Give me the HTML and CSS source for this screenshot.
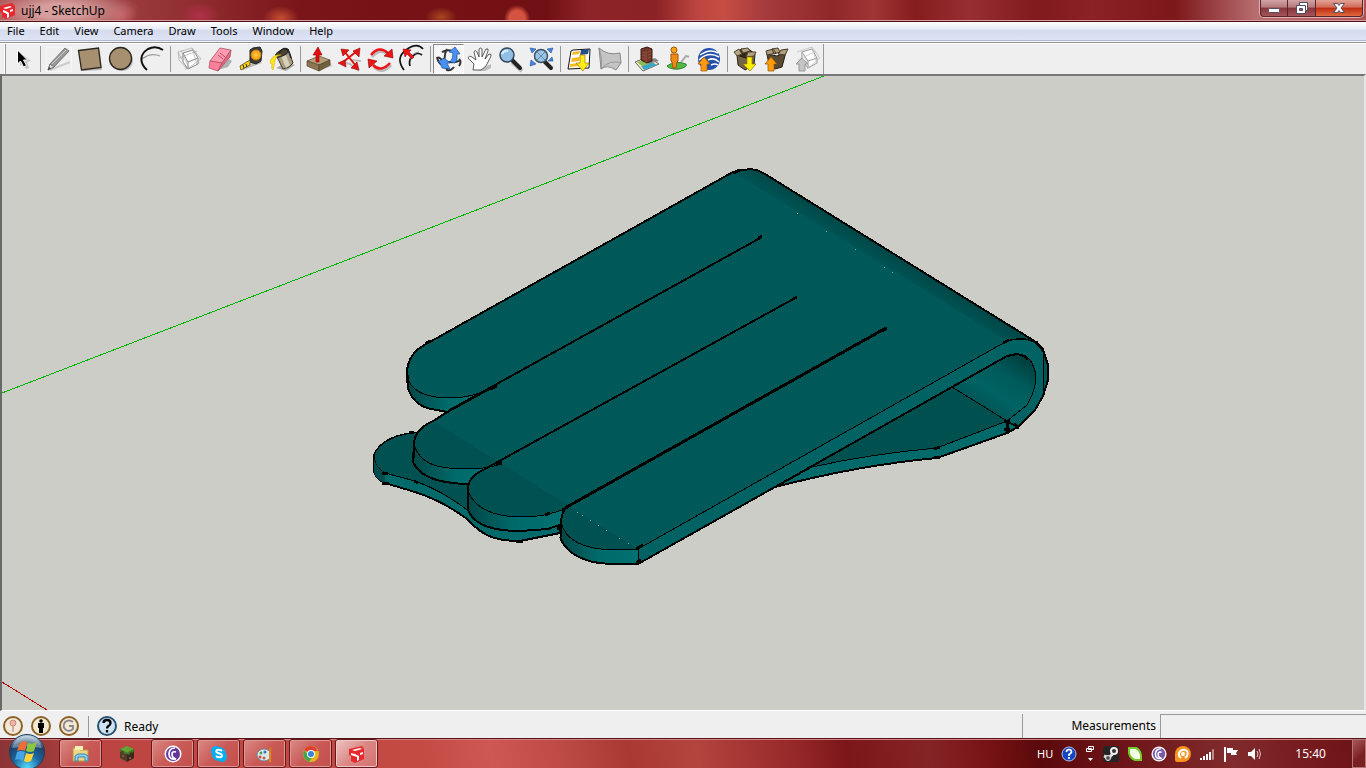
FILE: index.html
```html
<!DOCTYPE html>
<html lang="en">
<head>
    <meta charset="UTF-8">
    <meta name="viewport" content="width=device-width, initial-scale=1.0">
    <title>ujj4 - SketchUp</title>
    <link rel="stylesheet" href="styles.css">
</head>
<body>
    <!-- Title bar -->
    <header class="title-bar">
        <svg class="app-icon" viewBox="0 0 16 16"><path d="M0 3L12 0l3 3v9l-9 4-4-2v-4l-2-1z" fill="#e8282c"/><path d="M3 5l7-2 2 1-6 2zM3 7l3 1 3 2v4l-2 1v-4l-4-2zM10 7l3-1v2l-3 1z" fill="#fff"/></svg>
        <h1 class="title">ujj4 - SketchUp</h1>
        <div class="window-buttons">
            <button class="win-button" aria-label="Minimize"><svg viewBox="0 0 14 12"><rect x="1.5" y="6.500" width="11" height="4" rx="1" fill="#fff" stroke="#4e4f62"/></svg></button>
            <button class="win-button" aria-label="Restore"><svg viewBox="0 0 14 12"><path d="M4.500.5h8v8h-2v3h-9v-8h3z" fill="#fff" stroke="#4e4f62"/><path d="M4.500 6.500h3v2h-3z" fill="#a25a5e" stroke="#4e4f62"/><path d="M4.500 3.500h6v5" fill="none" stroke="#4e4f62"/></svg></button>
            <button class="win-button close" aria-label="Close"><svg viewBox="0 0 14 12"><path d="M1.500 1.500h4L7 3.500l1.500-2h4L9 6l3.500 4.500h-4L7 8.500l-1.500 2h-4L5 6z" fill="#fff" stroke="#4e4f62"/></svg></button>
        </div>
    </header>

    <!-- Menu -->
    <nav class="menu-bar">
        <button>File</button>
        <button>Edit</button>
        <button>View</button>
        <button>Camera</button>
        <button>Draw</button>
        <button>Tools</button>
        <button>Window</button>
        <button>Help</button>
    </nav>

    <!-- Toolbar -->
    <div class="toolbar" role="toolbar" aria-label="Getting started">
        <span class="grip"></span>
        <button aria-label="Select"><svg viewBox="0 0 31 30"><path d="M14 9v13l3-2 3 5 3-1-2-6 4-1z" fill="#999" opacity=".5"/><path d="M11.500 6v14l3-3 3 6 3-1.500-3-5.500h4z" stroke="#fff"/></svg></button>
        <span class="separator"></span>
        <button aria-label="Line"><svg viewBox="0 0 31 30"><rect x="3.500" y="3.500" width="25" height="24" fill="none" stroke="#fff" stroke-dasharray="1 1"/><path d="M7 26l20-8" stroke="#ccc" stroke-width="2"/><path d="M5 26l2-6L22 4l4 3-15 16z" fill="#999" stroke="#777"/><path d="M5 26l2-6 4 3z" fill="#ddd" stroke="#777"/><path d="M5 26l1-3 2 1.500z" fill="#444"/><path d="M9 20L23 6" stroke="#ccc"/></svg></button>
        <button aria-label="Rectangle"><svg viewBox="0 0 31 30"><path d="M8 9l18-2 2 19-19 1z" fill="#bbb"/><path d="M4.500 6.500L24.500 4l2.500 19.500-19.500 2.500z" fill="#a6906f" stroke="#2b2620" stroke-width="1.300"/></svg></button>
        <button aria-label="Circle"><svg viewBox="0 0 31 30"><circle cx="17" cy="16" r="11" fill="#bbb"/><circle cx="15.500" cy="14.500" r="11" fill="#a6906f" stroke="#2b2620" stroke-width="1.300"/></svg></button>
        <button aria-label="Arc"><svg viewBox="0 0 31 30" fill="none"><path d="M6 15q9-7 18-3" stroke="#999" stroke-width="1.200"/><path d="M11 26C2 18 5 9 12 5q8-4 15 1" stroke="#111" stroke-width="2"/></svg></button>
        <span class="separator"></span>
        <button aria-label="Make Component"><svg viewBox="0 0 31 30"><path d="M12 26l15-7-5-3-9 5z" fill="#ccc"/><path d="M10 9l10-3 5 8v6l-10 5-5-7z" fill="#fff" stroke="#888"/><path d="M15 18l10-4M15 18v7M10 9l5 9" fill="none" stroke="#888"/><path d="M5 8l14-4 9 11-14 10zM5 8l1 8 8 9M8 6l8 18M19 4l5 16M6 14l18-7" fill="none" stroke="#aaa" stroke-width=".7"/></svg></button>
        <button aria-label="Eraser"><svg viewBox="0 0 31 30"><path d="M14 26l11-11 3 2-4 6z" fill="#b0b0b0"/><path d="M16 4l11 2-9 13-12-2z" fill="#ff9bae" stroke="#ad5267" stroke-width=".8"/><path d="M6 17l12 2-4 8-9-3z" fill="#ff8098" stroke="#ad5267" stroke-width=".8"/><path d="M18 19l9-13-1 7-12 14z" fill="#e46882" stroke="#ad5267" stroke-width=".8"/><path d="M16 9l5 4M14 11l5 4" stroke="#c04a68"/></svg></button>
        <button aria-label="Tape Measure"><svg viewBox="0 0 31 30"><path d="M8 26l19-7-3-3-18 8z" fill="#bbb"/><path d="M15 6l3-2 7-1 2 4-1 10-5 3-6-2z" fill="#3b3b3b" stroke="#222"/><circle cx="21" cy="11" r="5" fill="#fbaa19" stroke="#c77b08"/><circle cx="21" cy="11" r="2" fill="#ffc74b"/><path d="M15 16v5L6 26l-1-4z" fill="#ffd21c" stroke="#53430a" stroke-width=".8"/><path d="M8 21l1 3M11 20l1 3" stroke="#222"/></svg></button>
        <button aria-label="Paint Bucket"><svg viewBox="0 0 31 30"><path d="M10 24l10 3 9-6-8-3z" fill="#aaa"/><path d="M10 11l12-6 5 14q-3 5-10 6z" fill="#a89c82" stroke="#3b352a"/><path d="M15 12l4-3 5 12-4 3z" fill="#d9d0ba"/><ellipse cx="16" cy="9" rx="7" ry="3" transform="rotate(-27 16 9)" fill="#4b4332" stroke="#222"/><path d="M13 9q8-11 12 5" fill="none" stroke="#222" stroke-width="1.500"/><path d="M15 11Q10 11 9 17l-2 9q-2-1-1-6-3 0-1-5 4-5 10-4z" fill="#ffe71b" stroke="#c8a800" stroke-width=".5"/></svg></button>
        <span class="separator"></span>
        <button aria-label="Push/Pull"><svg viewBox="0 0 31 30"><path d="M15 27l14-5-2-4-14 5z" fill="#bbb"/><path d="M4 17l12-5 11 4-11 5z" fill="#b69d79" stroke="#55462f" stroke-width=".7"/><path d="M4 17l12 4v6L4 22z" fill="#8e7654" stroke="#55462f" stroke-width=".7"/><path d="M16 21l11-5v5l-11 6z" fill="#73603f" stroke="#55462f" stroke-width=".7"/><path d="M15 3l4 8h-3v7h-3v-7h-3z" fill="#e30b0b" stroke="#910000" stroke-width=".6"/></svg></button>
        <button aria-label="Move"><svg viewBox="0 0 31 30"><path d="M8 18l8 2 9 7M17 16l10 1" fill="none" stroke="#bbb" stroke-width="2"/><path d="M10 7l12 15M23 7L8 19" stroke="#e41010" stroke-width="2"/><path d="M7 5l8 1-6 6zM26 4l-1 9-6-6zM4 19l7-3 1 7zM25 26l-8-2 6-6z" fill="#eb1212" stroke="#8d0808" stroke-width=".6"/></svg></button>
        <button aria-label="Rotate"><svg viewBox="0 0 31 30" fill="none"><path d="M6 11Q14 1 23 9M25 19q-9 10-17 2" stroke="#bbb" stroke-width="3" transform="translate(1 2)"/><path d="M6 11Q14 1 23 9M25 19q-9 10-17 2" stroke="#ed1515" stroke-width="2.500"/><path d="M27 5l1 9-9-2zM4 24l-1-9 9 2z" fill="#ed1515" stroke="#8b0505" stroke-width=".6"/></svg></button>
        <button aria-label="Offset"><svg viewBox="0 0 31 30" fill="none"><path d="M8 26Q-1 14 10 6t17-1M14 22q-2-7 4-11 4-3 8 0" stroke="#111" stroke-width="1.700"/><path d="M14 15q2-6 9-7" stroke="#888"/><path d="M7 5l8 1-2 2 5 5-2 2-5-5-2 3z" fill="#ef1515" stroke="#9b0505" stroke-width=".6"/></svg></button>
        <span class="separator"></span>
        <button class="pressed" aria-label="Orbit"><svg viewBox="0 0 31 30" fill="none"><path d="M9 8q8-4 14 1M5 13q10 8 21 4M14 5q-5 9 0 21 4 1 7-3" stroke="#333" stroke-width="2"/><path d="M4 13q1 7 8 9M26 15q3 3 0 7" stroke="#333" stroke-width="2"/><path d="M5 18l6-4 6 5h-3l3 6-8-1-2-5zM16 8l6-5 5 7h-3q1 6-2 9l-5-1q3-3 3-9z" fill="#4891f2" stroke="#1b4d96" stroke-width=".7"/></svg></button>
        <button aria-label="Pan"><svg viewBox="0 0 31 30"><path d="M14 27l13-7v4l-6 3z" fill="#bbb"/><path d="M9 26l1-6-6-6q1-3 4-1l4 3-2-8q1-3 3 0l2 5 0-8q2-2 3 0v8l4-8q3-1 2 2l-3 8 4-5q3 0 2 2l-5 10-5 4z" fill="#fff" stroke="#333" stroke-width=".8"/></svg></button>
        <button aria-label="Zoom"><svg viewBox="0 0 31 30"><path d="M17 18l10 9" stroke="#bbb" stroke-width="4"/><path d="M17 16l8 8" stroke="#222" stroke-width="4" stroke-linecap="round"/><circle cx="12" cy="11" r="7" fill="#92bfe5" stroke="#33495e" stroke-width="1.500"/><path d="M7 10q2-4 6-3" fill="none" stroke="#d9efff" stroke-width="2"/></svg></button>
        <button aria-label="Zoom Extents"><svg viewBox="0 0 31 30"><path d="M18 17l7 7" stroke="#222" stroke-width="4" stroke-linecap="round"/><circle cx="15" cy="12" r="6.500" fill="#9bc4e1" stroke="#3c5268" stroke-width="1.500"/><path d="M11 8l8 8M19 8l-8 8" stroke="#628caf"/><path d="M4 4l6 1-4 4zM27 4l-6 1 4 4zM4 22l1-6 5 4zM27 17l-5 0 4-4z" fill="#4385e0" stroke="#1f4f9c" stroke-width=".6"/></svg></button>
        <span class="separator"></span>
        <button aria-label="Add Location"><svg viewBox="0 0 31 30"><path d="M8 7l2-1 17-1-1 19-21 1z" fill="#fff" stroke="#111"/><path d="M9 14l8-1-1 4-8 1zM10 8l7-1-1 3-7 1zM7 20l9-1v3l-9 1z" fill="#f6b923"/><path d="M18 6l8-1-1 5-8 1z" fill="#234f85"/><path d="M17 11h5v8h4l-6 8-7-8h4z" fill="#ffeb18" stroke="#a77d05" stroke-width=".7"/></svg></button>
        <button aria-label="Toggle Terrain"><svg viewBox="0 0 31 30"><path d="M5 4q9 8 21 5l1 10-5 7q-9-6-15-1z" fill="#c4c4c4" stroke="#888"/><path d="M5 4q4 12 2 21 9-10 20-6" fill="none" stroke="#888" stroke-width=".7"/></svg></button>
        <span class="separator"></span>
        <button aria-label="Photo Textures"><svg viewBox="0 0 31 30"><path d="M4 18l13-5 11 7-16 7z" fill="#f4e7c4" stroke="#666"/><path d="M10 22l11-4 5 3-13 5z" fill="#3ba8cb"/><path d="M6 18l7-2 5 4-7 2z" fill="#8dbb54"/><path d="M17 20l11-3-4-3-6 2z" fill="#888"/><path d="M10 5l6-2 5 2v12l-5 2-6-3z" fill="#71372a" stroke="#3b1b13"/><path d="M15 7v11M11 8l3 1M11 11l3 1M11 14l3 1M17 8l3-1M17 11l3-1M17 14l3-1" stroke="#985542"/></svg></button>
        <button aria-label="Street View"><svg viewBox="0 0 31 30"><path d="M17 21l7-9 3 1" fill="none" stroke="#aaa" stroke-width="2"/><path d="M5 22q8-6 19-2 2 3-7 5-8 1-12-3z" fill="#52b947" stroke="#28882c"/><circle cx="12" cy="6" r="3" fill="#f6a51b" stroke="#a25b0a"/><path d="M9 10h7v7l-1 1-1 6h-3l-1-6-1-1z" fill="#ed8b14" stroke="#a95006"/></svg></button>
        <button aria-label="Preview in Google Earth"><svg viewBox="0 0 31 30"><circle cx="16" cy="15" r="11" fill="#2450aa"/><path d="M7 11q10-7 18-2M6 16q9-9 20-3M15 16q6-3 11 2M18 21q4-2 7 0" fill="none" stroke="#fff" stroke-width="1.500"/><path d="M11 13l6 7h-3v7H8v-7H5z" fill="#ff9b0b" stroke="#9d5600" stroke-width=".7"/></svg></button>
        <span class="separator"></span>
        <button aria-label="Get Models"><svg viewBox="0 0 31 30"><path d="M7 11l9 3 9-4-1 11-9 5-7-5z" fill="#74644a" stroke="#292116"/><path d="M7 11l4-6 9 1 5 4-9 4z" fill="#302819" stroke="#292116"/><path d="M7 12l-3-4 5-3 3 5zM11 5l7-1 2 3-7 2zM16 13l2-5 8 0-2 4z" fill="#b6a482" stroke="#51452f"/><path d="M17 13h5v7h4l-6 7-7-7h4z" fill="#fff000" stroke="#927900" stroke-width=".7"/></svg></button>
        <button aria-label="Share Model"><svg viewBox="0 0 31 30"><path d="M6 10l10 2 9-4-4 15-7 2-6-4z" fill="#594a34" stroke="#231c12"/><path d="M6 11l-1-4 7-2 3 4zM11 5l6-1 2 4-6 2zM17 10l3-4 7-1-3 6z" fill="#b09e7c" stroke="#463b28"/><path d="M10 13l6 7h-3v7H7v-7H4z" fill="#ff9c0b" stroke="#955000" stroke-width=".7"/></svg></button>
        <button aria-label="Share Component"><svg viewBox="0 0 31 30"><path d="M10 8l10-3 5 9v5l-9 5-6-8z" fill="#fff" stroke="#999"/><path d="M10 8l6 9 9-3M16 17v7" fill="none" stroke="#999"/><path d="M5 8l15-5 8 11-13 11M9 6l9 18M20 3l5 17M6 16l18-9" fill="none" stroke="#bbb" stroke-width=".7"/><path d="M10 14l6 6h-3v7H7v-7H4z" fill="#c5c5c5" stroke="#999"/></svg></button>
        <span class="toolbar-end"></span>
    </div>

    <!-- Model viewport -->
    <main class="viewport">
        <svg viewBox="2 76 1362 634" preserveAspectRatio="xMidYMid slice" role="img" aria-label="Teal model with four fingers">
            <defs>
                <linearGradient id="side1" x1="0" x2="1"><stop offset="0" stop-color="#004747"/><stop offset=".5" stop-color="#006b6b"/><stop offset="1" stop-color="#007070"/></linearGradient>
                <linearGradient id="roll" gradientUnits="userSpaceOnUse" x1="880" y1="262" x2="895" y2="238"><stop offset="0" stop-color="#005353"/><stop offset=".5" stop-color="#004646"/><stop offset="1" stop-color="#003333"/></linearGradient>
                <linearGradient id="inside" gradientUnits="userSpaceOnUse" x1="1018" y1="354" x2="980" y2="413"><stop offset="0" stop-color="#003f3f"/><stop offset=".35" stop-color="#005b5b"/><stop offset=".65" stop-color="#006363"/><stop offset="1" stop-color="#005050"/></linearGradient>
            </defs>
            <g shape-rendering="crispEdges" fill="none">
                <path d="M2 393L824 76" stroke="#00b400"/>
                <path d="M2 682L47 710" stroke="#b40000"/>
            </g>
            <g class="edges">
                <!-- lower plate -->
                <path d="M412 433Q382 437 374 455V472Q377 480 385 483L415 492Q443 501 467 519C482 535 493 541 520 541L560 533V470L440 430z" fill="#006a6a" class="bold"/>
                <path d="M412 433Q382 437 374 455Q374 467 385 473L415 481Q443 491 470 512L500 500 440 430z" fill="#005252"/>
                <path d="M374 457Q374 467 385 473V483Q376 480 374 472z" fill="#004d4d" stroke="none"/>
                <path d="M775 487Q860 465 937 458L1007 433 1018 427 1007 421 900 390z" fill="#006a6a" class="bold"/>
                <path d="M952 387L1007 421 937 448Q870 454 812 467L780 485 860 435z" fill="#005050"/>
                <!-- band and roll -->
                <path d="M952 387L1007 354 1038 354 1040 390 1025 410 1007 421z" fill="url(#inside)" stroke="none"/>
                <path d="M638 549L1007 341Q1014 338 1027 339L1036 342 1043 350 1048 365V380L1043 396 1035 410Q1028 419 1018 427L1007 421 1027 405Q1036 390 1036 377 1033 354 1017 354L1007 356 638 564z" fill="#006262"/>
                <path d="M952 387L1007 421"/>
                <path d="M1043 350L1048 365V380L1043 396z" fill="#005656"/>
                <!-- finger sides -->
                <path d="M407 376L408 388Q413 405 431 409L448 412 490 389z" fill="url(#side1)" class="bold"/>
                <path d="M414 442L413 462Q419 475 437 480 452 484 470 484L502 464z" fill="url(#side1)" class="bold"/>
                <path d="M468 487V510Q476 531 520 531L548 529 562 524 565 509z" fill="url(#side1)" class="bold"/>
                <path d="M561 522L560 537Q566 555 593 562 610 565 638 564V549z" fill="url(#side1)" stroke="none"/>
                <path d="M560 537Q566 555 593 562 610 565 638 564L775 487 1007 356 1017 354 1027 357M1007 341Q1014 338 1027 339L1036 342 1043 350 1048 365V380L1043 396 1035 410 1018 427" class="bold"/>
                <!-- top face -->
                <path d="M733 172L428 343Q407 354 407 376C411 393 430 398 450 398Q470 398 490 389L497 386 435 420Q414 430 414 444C419 463 435 469 467 469Q486 469 502 464L483 470Q468 477 468 491C476 512 500 517 523 517Q544 517 565 509 561 514 561 522C566 544 590 550 617 550L638 549 1007 341 733 172z" fill="#005858" stroke="none"/>
                <path d="M435 422Q414 431 414 444C419 463 435 469 467 469Q486 469 502 464L483 470Q468 477 468 491C476 512 500 517 523 517Q544 517 565 509 561 514 561 522C566 544 590 550 617 550L638 549z" fill="#005151" stroke="none"/>
                <path d="M733 172Q745 168 757 170L765 174 1036 342 1026 339Q1015 338 1007 341z" fill="url(#roll)" stroke="none"/>
                <path d="M407 376C411 393 430 398 450 398Q470 398 490 389M414 444C419 463 435 469 467 469Q486 469 502 464M468 491C476 512 500 517 523 517Q544 517 565 509M561 522C566 544 590 550 617 550L638 549 1007 341Q1015 338 1026 339L1036 342"/>
                <path d="M407 378Q405 354 428 343L733 172Q745 168 757 170L765 174 1036 342M448 411L762 237M447 412L435 420Q414 429 414 444V458M483 470L797 297M483 470Q468 477 468 489V509M565 509Q561 514 561 524V537" class="bold"/>
                <path d="M565 508L886 328" stroke-width="3"/>
                <path d="M733 173l7-3M758 238l4-2M793 299l4-2M490 389l7-3M496 465l6-3M562 510l6-3M882 331l5-3M636 549l7-4M1003 343l6-3M1024 356l4 3M1004 421h6M1007 420v14M1004 429h6M1014 424l5 4M934 449l6-2M934 458l6-1M1036 342l7 8M407 375v8M382 473l6 1M382 483h7M414 481l4 2M409 433l5-1M545 515l5-2M516 541h7M558 525v5M425 344l5-3M636 563l5-3" stroke-width="3"/>
            </g>
            <path d="M797 213h1M826 231h1M855 249h1M884 267h1M892 272h1M577 512h1M582 515h1M590 520h1M598 525h1M606 530h1M619 538h1M628 543h1" stroke="#72aaa9" shape-rendering="crispEdges"/>
        </svg>
    </main>

    <!-- Status bar -->
    <footer class="status-bar">
        <button class="status-icon" aria-label="Geo-location"><svg viewBox="0 0 22 22"><circle cx="11" cy="11" r="9" fill="#f3e8d8" stroke="#8b6226" stroke-width="2"/><circle cx="11" cy="8" r="3" fill="#efb6a7" stroke="#c98879"/><path d="M11 11v6" stroke="#aa7768"/></svg></button>
        <button class="status-icon" aria-label="Credits"><svg viewBox="0 0 22 22"><circle cx="11" cy="11" r="9" fill="#f3e8d0" stroke="#8b6226" stroke-width="2"/><circle cx="11" cy="6" r="1.800"/><path d="M8 8h6v5h-1v5H9v-5H8z"/></svg></button>
        <button class="status-icon" aria-label="Sign in"><svg viewBox="0 0 22 22"><circle cx="11" cy="11" r="9" fill="#f3e8d8" stroke="#8b6226" stroke-width="2"/><path d="M15 7q-4-3-8 0-3 5 1 8 4 2 7-1v-3h-4" fill="none" stroke="#888" stroke-width="1.800"/></svg></button>
        <span class="status-line"></span>
        <button class="status-icon" aria-label="Instructor"><svg viewBox="0 0 22 22"><circle cx="11" cy="11" r="9" fill="#cee4f5" stroke="#28526e" stroke-width="2"/><path d="M7.500 8q0-3 3.500-3t3.500 3q0 2-2 3-1.500 1-1.500 2.500M11 15v2.500" fill="none" stroke="#000" stroke-width="2.300"/></svg></button>
        <span class="status-text">Ready</span>
        <label class="measure-label" for="measure">Measurements</label>
        <input class="measure" id="measure" type="text">
    </footer>

    <!-- Windows taskbar -->
    <div class="taskbar">
        <button class="start" aria-label="Start"><svg viewBox="0 0 38 38"><defs><radialGradient id="orb" cx=".5" cy=".95" r=".9"><stop offset="0" stop-color="#55dcff"/><stop offset=".45" stop-color="#1b669e"/><stop offset=".8" stop-color="#1e4168"/><stop offset="1" stop-color="#a6c5d9"/></radialGradient></defs><circle cx="19" cy="19" r="17.500" fill="url(#orb)" stroke="#243e55"/><path d="M4 15Q8 3 19 3t15 12q-15-3-30 0z" fill="#fff" opacity=".35"/><path d="M12 10q4-3 7-1l-2 9q-4-2-8 0z" fill="#f26b32"/><path d="M20 10q4 2 9-1l-3 9q-4 2-8 0z" fill="#8cc63f"/><path d="M9 19q4-2 8 0l-2 9q-4-3-8-1z" fill="#45a4e5"/><path d="M18 20q4 2 8 0l-3 8q-4 2-7 0z" fill="#ffd23b"/></svg></button>
        <div class="tasks">
            <button class="task" aria-label="Explorer"><svg viewBox="0 0 18 18"><path d="M1 3h6l1 2h8v11H1z" fill="#efd681" stroke="#ba9542"/><path d="M3 1h8v4H3z" fill="#f7edb6"/><path d="M3 16v-5l3-2h7l3 2v5h-3v-4H6v4z" fill="#8fd0f0" stroke="#3686b9"/></svg></button>
            <button class="task plain" aria-label="Minecraft"><svg viewBox="0 0 18 18"><path d="M2 4l7 4v9l-7-4z" fill="#543a29"/><path d="M9 8l7-4v9l-7 4z" fill="#38271c"/><path d="M9 1l7 3-7 4-7-4z" fill="#61a436"/><path d="M2 4l7 4 7-4v2l-2 2-1-1-2 3-2-1-3 0-1-3-3 1z" fill="#42782a"/><path d="M4 10h2v2H4zM11 12h2v2h-2z" fill="#80573c"/></svg></button>
            <button class="task" aria-label="BitTorrent"><svg viewBox="0 0 18 18"><circle cx="9" cy="9" r="8.500" fill="#fff"/><circle cx="9" cy="9" r="7" fill="#63379b"/><path d="M11 3q-6 0-6 6t7 5q-4-1-4-5 0-3 4-2" fill="none" stroke="#fff" stroke-width="1.700"/></svg></button>
            <button class="task" aria-label="Skype"><svg viewBox="0 0 18 18"><rect x="1" y="1" width="10" height="10" rx="5" fill="#00aff0"/><rect x="7" y="7" width="10" height="10" rx="5" fill="#00aff0"/><circle cx="9" cy="9" r="7" fill="#00aff0"/><path d="M12 6q-2-2-5-1-2 2 1 3l3 1q2 2 0 3-3 1-5-1" fill="none" stroke="#fff" stroke-width="2"/></svg></button>
            <button class="task" aria-label="Paint"><svg viewBox="0 0 18 18"><ellipse cx="8" cy="10" rx="7" ry="6" fill="#d9e7ef" stroke="#6a8c9e"/><circle cx="5" cy="8" r="1.500" fill="#4b9f4a"/><circle cx="9" cy="7" r="1.500" fill="#3b74be"/><circle cx="4" cy="12" r="1.500" fill="#de4437"/><circle cx="8" cy="13" r="1.500" fill="#c85850"/><path d="M14 4v13" stroke="#e68613" stroke-width="2"/><path d="M13 5l1-4 2 3-1 3z" fill="#cf7a28"/></svg></button>
            <button class="task" aria-label="Chrome"><svg viewBox="0 0 18 18"><circle cx="9" cy="9" r="8" fill="#e4b51f"/><path d="M9 9L2 5q4-6 11-3l3 4H9z" fill="#df4031"/><path d="M2 5q-3 8 5 12l4-6-5-1z" fill="#44a64c"/><circle cx="9" cy="9" r="4" fill="#fff"/><circle cx="9" cy="9" r="3" fill="#3a83db"/></svg></button>
            <button class="task active" aria-label="SketchUp"><svg viewBox="0 0 18 18"><path d="M1 4L14 1l2 3v10l-9 4-4-2v-5l-2-1z" fill="#e8282c"/><path d="M4 5l8-2 2 1-7 2zM3 8l4 1 4 2v4l-2 1v-4l-6-2zM12 8l3-1v2l-3 1z" fill="#fff"/></svg></button>
        </div>
        <div class="tray">
            <span class="lang">HU</span>
            <svg viewBox="0 0 16 16"><circle cx="8" cy="8" r="7" fill="#1746c3" stroke="#aebde4"/><path d="M5.500 6q0-2.500 2.500-2.500T10.500 6Q10 7.500 8 8.500V10M8 11v2" fill="none" stroke="#fff" stroke-width="1.700"/></svg>
            <svg class="tray-restore" viewBox="0 0 10 16"><path d="M3.500.5h5v3h-5zM1.500 2.500h5v3h-5z" fill="#6d1012" stroke="#fff"/><path d="M3 12h5l-2.500 3z" fill="#fff"/></svg>
            <svg viewBox="0 0 16 16"><rect width="16" height="16" rx="2" fill="#252525"/><path d="M1 10l5 2 6-7" fill="none" stroke="#ddd" stroke-width="3"/><circle cx="11" cy="5" r="4" fill="#eee"/><circle cx="11" cy="5" r="2" fill="#333"/><circle cx="5" cy="12" r="2.500" fill="#555" stroke="#eee"/></svg>
            <svg viewBox="0 0 16 16"><path d="M2 2h7q4 2 5 7v5H8q-5-2-6-7z" fill="#f5ffe7" stroke="#75c928" stroke-width="2"/></svg>
            <svg viewBox="0 0 18 18"><circle cx="9" cy="9" r="8.500" fill="#fff"/><circle cx="9" cy="9" r="7" fill="#7a5aa6"/><path d="M11 3q-6 0-6 6t7 5q-4-1-4-5 0-3 4-2" fill="none" stroke="#fff" stroke-width="1.700"/></svg>
            <svg viewBox="0 0 16 16"><path d="M8 0a8 8 0 110 16H2q-2 0-2-2V8a8 8 0 018-8z" fill="#f7931e"/><path d="M6 12Q3 10 4 7q2-4 6-3t2 6l-2 2" fill="none" stroke="#fff" stroke-width="2"/><circle cx="8" cy="8" r="2" fill="#fff"/></svg>
            <svg viewBox="0 0 16 16"><path d="M1 12h2v2H1zM4 10h2v4H4zM7 8h2v6H7zM10 6h2v8h-2z" fill="#fff"/><path d="M13.500 3.500h1v10h-1z" fill="none" stroke="#bd8d8e"/></svg>
            <svg viewBox="0 0 16 16"><path d="M2 1v15" stroke="#fff" stroke-width="2"/><path d="M4 2h6v2h5l-2 3 1 2H8V7H4z" fill="#fff"/></svg>
            <svg viewBox="0 0 16 16"><path d="M1 6h3l4-4v12l-4-4H1z" fill="#fff"/><path d="M10 5q2 3 0 6M12 3q3 5 0 10" fill="none" stroke="#e1c3c3"/></svg>
            <time class="clock">15:40</time>
            <button class="show-desktop" aria-label="Show desktop"></button>
        </div>
    </div>
</body>
</html>
```
FILE: styles.css
```css
/* Base Styles */
* {
    margin: 0;
    padding: 0;
    box-sizing: border-box;
}

body {
    font-family: 'Noto Sans', sans-serif;
    font-size: 12px;
    color: #000;
    background-color: #efefef;
    height: 100vh;
    display: flex;
    flex-direction: column;
    overflow: hidden;
}

button {
    border: none;
    background: none;
    font: inherit;
    color: inherit;
}

svg {
    display: block;
}

/* Title Bar */
.title-bar {
    flex: none;
    height: 22px;
    display: flex;
    align-items: flex-start;
    border-bottom: 1px solid #4a1519;
    box-shadow: inset 0 -1px #d79b9d;
    background:
        radial-gradient(ellipse 80px 24px at 60px 11px, rgba(225, 180, 178, 0.8) 30%, transparent),
        radial-gradient(ellipse 16px 14px at 121px 16px, rgba(205, 90, 95, 0.7), transparent),
        radial-gradient(ellipse 20px 14px at 200px 16px, rgba(185, 50, 80, 0.8), transparent),
        radial-gradient(ellipse 18px 12px at 281px 18px, rgba(215, 90, 55, 0.8), transparent),
        radial-gradient(ellipse 16px 10px at 441px 17px, rgba(175, 75, 32, 0.9), transparent),
        radial-gradient(ellipse 13px 14px at 517px 19px, #d45340 60%, transparent),
        linear-gradient(90deg, #a8484a 0%, #a04042 8%, #7a1519 22%, #711014 40%, #8c2429 43%, #8b2225 48%, #bc4540 51%, #c64d43 53%, #a63a3d 56%, #8f282a 61%, #a03535 64%, #851c1e 67%, #972f32 71%, #811a1d 76%, #8b2225 80%, #7c171a 86%, #b86e70 92%, #b05356 100%);
}

.app-icon {
    width: 16px;
    height: 16px;
    margin: 3px 5px 0 0;
}

.title {
    font-size: 12px;
    line-height: 21px;
    font-weight: 400;
}

.window-buttons {
    display: flex;
    margin: 0 2px 0 auto;
    border: 1px solid #e2b0b1;
    border-top: none;
    border-radius: 0 0 5px 5px;
    height: 18px;
}

.win-button {
    width: 28px;
    display: flex;
    justify-content: center;
    padding-top: 2px;
    border: 1px solid #57252b;
    border-top: none;
    border-left: none;
    background: linear-gradient(#d3a3a5, #b5797c 45%, #86353a 50%, #a4555a);
}

.win-button:first-child {
    border-left: 1px solid #57252b;
    border-radius: 0 0 0 4px;
}

.win-button svg {
    width: 14px;
    height: 12px;
}

.win-button.close {
    width: 47px;
    border-radius: 0 0 4px 0;
    background: linear-gradient(#e1a296, #d36b58 45%, #bd2b12 50%, #df6a3d);
}

/* Menu */
.menu-bar {
    flex: none;
    height: 21px;
    display: flex;
    border-bottom: 1px solid #929292;
    box-shadow: inset 0 -1px #f5f6fa, inset 0 -2px #b1b8d1;
    background: linear-gradient(#fff, #e7ebf5 7px, #d4dbed 8px, #e0e6f7);
}

.menu-bar button {
    padding: 0 8px 3px 7px;
    font-size: 11px;
    line-height: 17px;
}

/* Toolbar */
.toolbar {
    flex: none;
    height: 31px;
    display: flex;
    border-top: 1px solid #fff;
}

.toolbar button,
.toolbar svg {
    width: 31px;
    height: 30px;
}

.toolbar .pressed {
    border: 1px solid #fff;
    border-top-color: #888;
    border-left-color: #888;
    background: repeating-conic-gradient(#fff 0 25%, #efefef 0 50%) 0 0 / 2px 2px;
}

.toolbar .pressed svg {
    margin: -1px;
}

.grip {
    width: 6px;
    border-right: 1px solid #999;
    box-shadow: inset -1px 0 #fff;
}

.separator {
    width: 1px;
    margin: 2px 2px 2px 3px;
    background-color: #999;
}

.toolbar-end {
    width: 1px;
    background-color: #999;
}

/* Model Viewport */
.viewport {
    flex: 1;
    min-height: 0;
    background-color: #cdcdc8;
    border: 2px solid #696969;
    border-top-color: #777;
    border-right-color: #e6e6e6;
    border-bottom: 1px solid #fff;
}

.viewport svg {
    width: 100%;
    height: 100%;
}

.edges {
    fill: none;
    stroke: #000;
    stroke-width: 1;
    shape-rendering: crispEdges;
}

.bold {
    stroke-width: 2;
}

/* Status Bar */
.status-bar {
    flex: none;
    height: 27px;
    display: flex;
    align-items: center;
    padding: 3px 0 0 2px;
}

.status-icon {
    width: 22px;
    height: 22px;
    margin-right: 6px;
}

.status-line {
    width: 1px;
    height: 21px;
    margin: 0 7px 0 2px;
    background-color: #999;
}

.status-text {
    flex: 1;
}

.measure-label {
    align-self: stretch;
    padding: 0 4px 0 48px;
    border-left: 1px solid #999;
    line-height: 24px;
}

.measure {
    width: 15%;
    min-width: 206px;
    align-self: stretch;
    background-color: #efefef;
    border: 1px solid #999;
    border-right: none;
    border-bottom: none;
}

/* Taskbar */
.taskbar {
    flex: none;
    position: relative;
    height: 30px;
    display: flex;
    padding-left: 59px;
    border-top: 1px solid #541519;
    box-shadow: inset 0 1px #d68183;
    background: linear-gradient(80deg, #8b3436 0%, #963838 3%, #bd4541 7%, #c44b44 31%, #ce5854 36%, #bd4b46 41%, #aa3833 46%, #b3443e 51%, #97292a 58%, #7b1619 62%, #852426 68%, #731012 73%, #5a0a0c 76%, #6c1417 82%, #812b2d 90%, #771c1f 95%, #6c1114 100%);
}

.start {
    position: absolute;
    left: 8px;
    top: -6px;
    width: 38px;
    height: 38px;
}

.tasks {
    display: flex;
    gap: 3px;
}

.task {
    width: 43px;
    display: flex;
    align-items: center;
    justify-content: center;
    border: 1px solid #65181b;
    border-radius: 3px;
    box-shadow: inset 0 0 0 1px #df9694;
    background: linear-gradient(135deg, #dc8b87, #c95a56 50%, #c34f4b);
}

.task svg {
    width: 18px;
    height: 18px;
}

.task.plain {
    border-color: transparent;
    box-shadow: none;
    background: none;
}

.task.active {
    box-shadow: inset 0 0 0 1px #f2c8c6;
    background: linear-gradient(135deg, #f0c4c1, #da8885 50%, #d3716d);
}

.tray {
    margin-left: auto;
    display: flex;
    align-items: center;
    gap: 8px;
    color: #fff;
}

.tray svg {
    width: 16px;
    height: 16px;
}

.tray .tray-restore {
    width: 10px;
    height: 22px;
}

.lang {
    font-size: 11px;
}

.clock {
    padding: 0 18px 0 24px;
}

.show-desktop {
    align-self: stretch;
    width: 14px;
    border: 1px solid #b37779;
    background: linear-gradient(135deg, #a9595b, #7b2022 60%);
}
```
